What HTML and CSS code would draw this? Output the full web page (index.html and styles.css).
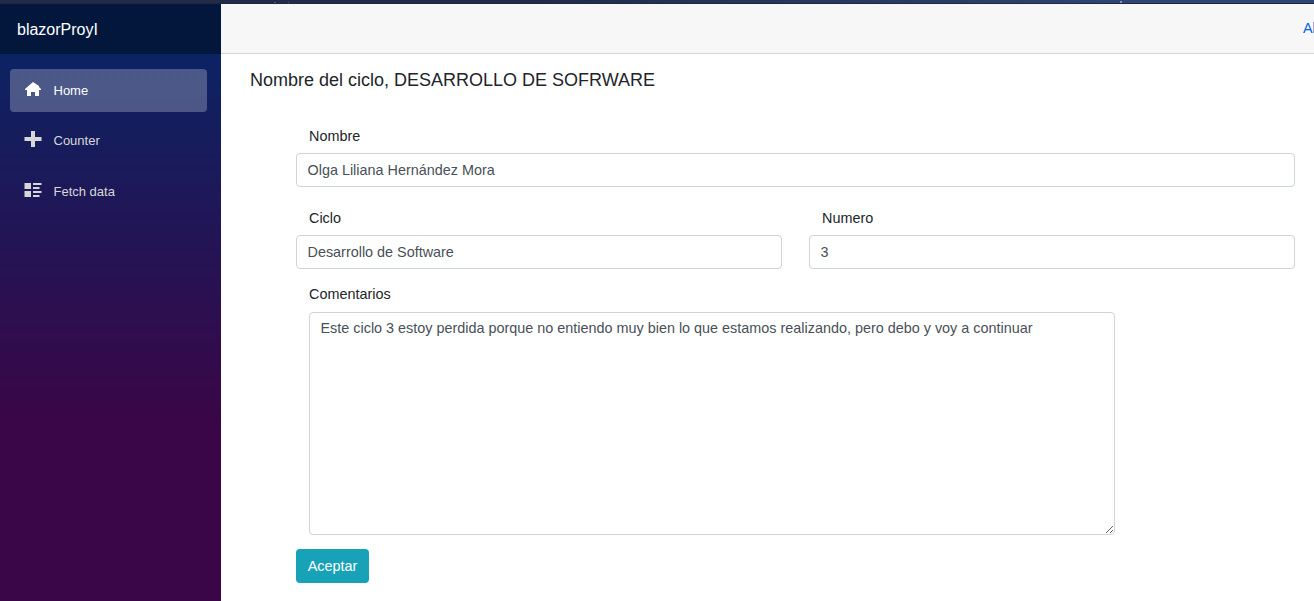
FILE: index.html
```html
<!DOCTYPE html>
<html lang="es">
<head>
<meta charset="utf-8">
<title>blazorProyI</title>
<link rel="stylesheet" href="styles.css">
</head>
<body>
<div class="window-edge"></div>
<div class="page">
  <aside class="sidebar">
    <div class="brand"><span>blazorProyI</span></div>
    <nav class="nav">
      <a class="nav-link active"><svg class="icon" viewBox="0 0 18 18"><path d="M9 2 1 9v1h2v6h4v-4h4v4h4v-6h2V9l-2-2V6z"/></svg><span>Home</span></a>
      <a class="nav-link counter"><svg class="icon" viewBox="0 0 18 18"><path d="M7 1h4v6h6.5v4H11v6H7v-6H.5V7H7z"/></svg><span>Counter</span></a>
      <a class="nav-link"><svg class="icon" viewBox="0 0 18 18"><path d="M.5 2H7v6H.5zM.5 10H7v6H.5zM9 2h8.5v2H9zM9 6h6.500v2H9zM9 10h8.500v2H9zM9 14h6.500v2H9z"/></svg><span>Fetch data</span></a>
    </nav>
  </aside>
  <main class="main">
    <header class="top-row"><a class="about">About</a></header>
    <section class="content">
      <h5 class="title">Nombre del ciclo, DESARROLLO DE SOFRWARE</h5>
      <form class="form">
        <label class="label" for="nombre">Nombre</label>
        <input class="control" id="nombre" value="Olga Liliana Hernández Mora">
        <div class="columns">
          <div class="field">
            <label class="label" for="ciclo">Ciclo</label>
            <input class="control" id="ciclo" value="Desarrollo de Software">
          </div>
          <div class="field">
            <label class="label" for="numero">Numero</label>
            <input class="control" id="numero" value="3">
          </div>
        </div>
        <label class="label comments-label" for="comentarios">Comentarios</label>
        <textarea class="control comments" id="comentarios" spellcheck="false">Este ciclo 3 estoy perdida porque no entiendo muy bien lo que estamos realizando, pero debo y voy a continuar</textarea>
        <button class="button" type="button">Aceptar</button>
      </form>
    </section>
  </main>
</div>
</body>
</html>
```
FILE: styles.css
```css
* { box-sizing: border-box; }
body {
  margin: 0;
  height: 601px;
  overflow: hidden;
  font-family: "Liberation Sans", Arial, sans-serif;
  font-size: 14.4px;
  line-height: 21px;
  color: #212529;
  background: #fff;
}
.window-edge {
  height: 4px;
  background:
    linear-gradient(#8795b5, #8795b5) 1120px 1px / 2px 2px no-repeat,
    linear-gradient(#4d5870, #4d5870) 274px 2px / 2px 1px no-repeat,
    linear-gradient(#4d5870, #4d5870) 288px 2px / 1px 1px no-repeat,
    linear-gradient(90deg, #212b45 0%, #212b45 40%, #2f4472 85%);
  border-bottom: 1px solid #1c2848;
}
.page { display: flex; height: 597px; }
.sidebar {
  flex: 0 0 221px;
  background: linear-gradient(180deg, #052767 0%, #3a0647 70%);
}
.brand {
  height: 50px;
  padding: 0 17px;
  display: flex;
  align-items: center;
  font-size: 16px;
  color: #fff;
  background: #03173d;
}
.nav {
  display: flex;
  flex-direction: column;
  gap: 7.5px;
  padding: 15px 14px 0 10px;
}
.nav-link {
  display: flex;
  align-items: center;
  height: 43px;
  padding-left: 14px;
  border-radius: 4px;
  font-size: 13px;
  color: #d7d7d7;
}
.active { color: #fff; background: rgba(255, 255, 255, .25); }
.counter { padding-bottom: 2px; }
.icon { width: 18px; height: 18px; margin: -3px 11.5px 0 0; fill: currentColor; }
.main { flex: 1; min-width: 0; }
.top-row {
  height: 50px;
  padding: 14px 0 0 1082px;
  overflow: hidden;
  background: #f7f7f7;
  border-bottom: 1px solid #d6d5d5;
}
.about { color: #0366d6; }
.content { padding: 15px 19px 0 29px; }
.title { margin: 0; font-size: 18px; font-weight: 400; line-height: 22px; }
.form { padding: 35px 0 0 46px; }
.label { display: block; padding-left: 13px; margin-bottom: 6px; }
.control {
  display: block;
  width: 100%;
  height: 34px;
  padding: 5px 10.5px;
  border: 1px solid #ced4da;
  border-radius: 4px;
  font: inherit;
  color: #495057;
  background: #fff;
  outline: none;
}
.columns { display: grid; grid-template-columns: 1fr 1fr; gap: 27px; padding-top: 21px; }
.comments-label { margin-top: 15px; margin-bottom: 7px; }
.comments { width: 806px; height: 223px; margin-left: 13px; resize: vertical; }
.button {
  display: block;
  width: 73px;
  height: 34px;
  margin-top: 14px;
  padding: 0;
  border: 0;
  border-radius: 4px;
  font: inherit;
  color: #fff;
  background: #17a2b8;
}
```
